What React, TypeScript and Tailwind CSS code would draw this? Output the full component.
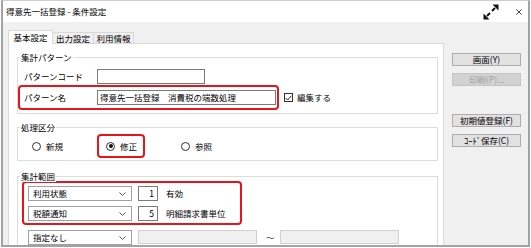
import React from 'react';

function GroupBox({ label, className, children }: { label: string; className?: string; children: React.ReactNode }) {
  return (
    <div className={`relative border border-[#dcdcdc] ${className ?? ''}`}>
      <span className="absolute left-[2px] top-[-6px] bg-white px-[1px] leading-[11px]">{label}</span>
      {children}
    </div>
  );
}

function Chevron() {
  return (
    <svg width="7" height="4" viewBox="0 0 7 4" className="shrink-0">
      <path d="M0.5 0.5 L3.5 3.5 L6.5 0.5" fill="none" stroke="#555" strokeWidth="1" />
    </svg>
  );
}

function Dropdown({ value }: { value: string }) {
  return (
    <div className="flex h-[15px] w-[104px] shrink-0 items-center justify-between border border-[#a0a0a0] bg-white pl-[4px] pr-[5px]">
      <span>{value}</span>
      <Chevron />
    </div>
  );
}

function NumBox({ value }: { value: string }) {
  return (
    <div className="flex h-[15px] w-[20px] shrink-0 items-center justify-end border border-[#7a7a7a] bg-white pr-[3px]">
      {value}
    </div>
  );
}

function Radio({ label, checked }: { label: string; checked?: boolean }) {
  return (
    <div className="flex items-center gap-[5px]">
      <span className="flex h-[9px] w-[9px] items-center justify-center rounded-full border border-[#333] bg-white">
        {checked && <span className="h-[4px] w-[4px] rounded-full bg-[#111]" />}
      </span>
      <span>{label}</span>
    </div>
  );
}

function SideButton({ label, disabled }: { label: string; disabled?: boolean }) {
  return (
    <div
      className={`flex h-[13px] w-[69px] items-center justify-center border ${
        disabled ? 'border-[#c4c4c4] bg-[#d2d2d2] text-[#a0a0a0]' : 'border-[#adadad] bg-[#e1e1e1] text-black'
      }`}
    >
      {label}
    </div>
  );
}

export default function App() {
  return (
    <div className="h-[248px] w-[531px] overflow-hidden bg-white font-['Noto_Sans_CJK_JP','Noto_Sans',sans-serif] text-[8.5px] leading-none text-black">
      <div className="ml-[1px] flex h-[247px] w-[529px] flex-col border-x-2 border-b-2 border-t border-[#a3a3a3] border-t-[#cfcfcf]">
        {/* title bar */}
        <div className="flex h-[21px] shrink-0 items-center bg-white pl-[3px] pr-[6px]">
          <span className="text-[8.5px]">得意先一括登録 - 条件設定</span>
          <div className="flex-1" />
          <svg width="16" height="16" viewBox="0 0 16 16" className="mt-[1px]">
            <path d="M15.5 0.5 L15.5 6.5 L9.5 0.5 Z" fill="#111" />
            <path d="M0.5 15.5 L0.5 9.5 L6.5 15.5 Z" fill="#111" />
            <path d="M12 4 L9 7" stroke="#111" strokeWidth="2" />
            <path d="M4 12 L7 9" stroke="#111" strokeWidth="2" />
          </svg>
          <svg width="6" height="6" viewBox="0 0 6 6" className="ml-[17px]">
            <path d="M0.3 0.3 L5.7 5.7 M5.7 0.3 L0.3 5.7" stroke="#333" strokeWidth="0.9" />
          </svg>
        </div>

        {/* body */}
        <div className="flex min-h-0 flex-1 bg-[#f0f0f0] pl-[5px] pt-[8px]">
          <div className="flex w-[436px] shrink-0 flex-col">
            <div className="flex h-[13px] items-end">
              <div className="relative z-10 -mb-[1px] flex h-[14px] w-[45px] items-center justify-center border border-b-0 border-[#d9d9d9] bg-white">
                基本設定
              </div>
              <div className="flex h-[11px] w-[41px] items-center justify-center border border-b-0 border-l-0 border-[#d9d9d9] bg-[#f0f0f0]">
                出力設定
              </div>
              <div className="flex h-[11px] w-[40px] items-center justify-center border border-b-0 border-l-0 border-[#d9d9d9] bg-[#f0f0f0]">
                利用情報
              </div>
            </div>

            <div className="min-h-0 flex-1 overflow-hidden border border-b-0 border-[#d9d9d9] bg-white pl-[8px] pr-[5px]">
              <GroupBox label="集計パターン" className="mt-[13px] pb-[3px] pt-[11px]">
                <div className="flex h-[15px] items-center pl-[6px]">
                  <span className="w-[73px] shrink-0">パターンコード</span>
                  <div className="h-[15px] w-[108px] border border-[#7a7a7a] bg-white" />
                </div>
                <div className="mt-[1px] flex items-center">
                  <div className="flex h-[25px] w-[261px] items-center rounded-[4px] border-2 border-[#e8141c] pl-[4px]">
                    <span className="w-[73px] shrink-0">パターン名</span>
                    <div className="flex h-[15px] w-[179px] items-center border border-[#7a7a7a] bg-white pl-[2px]">
                      得意先一括登録　消費税の端数処理
                    </div>
                  </div>
                  <div className="ml-[5px] flex items-center gap-[4px]">
                    <span className="flex h-[9px] w-[9px] items-center justify-center border border-[#333] bg-white">
                      <svg width="7" height="6" viewBox="0 0 7 6">
                        <path d="M0.6 3 L2.6 5 L6.4 0.8" fill="none" stroke="#222" strokeWidth="1" />
                      </svg>
                    </span>
                    <span>編集する</span>
                  </div>
                </div>
              </GroupBox>

              <GroupBox label="処理区分" className="mt-[13px] pb-[2px] pt-[6px]">
                <div className="flex h-[24px] items-center pl-[14px]">
                  <div className="w-[65px] shrink-0">
                    <Radio label="新規" />
                  </div>
                  <div className="flex h-[24px] w-[48px] shrink-0 items-center rounded-[4px] border-2 border-[#e8141c] pl-[7px]">
                    <Radio label="修正" checked />
                  </div>
                  <div className="ml-[36px]">
                    <Radio label="参照" />
                  </div>
                </div>
              </GroupBox>

              <GroupBox label="集計範囲" className="mt-[15px] h-[80px] pt-[4px]">
                <div className="ml-[4px] flex w-[220px] flex-col gap-[5px] rounded-[4px] border-2 border-[#e8141c] pb-[2px] pl-[4px] pt-[3px]">
                  <div className="flex items-center">
                    <Dropdown value="利用状態" />
                    <div className="ml-[6px]"><NumBox value="1" /></div>
                    <span className="ml-[8px]">有効</span>
                  </div>
                  <div className="flex items-center">
                    <Dropdown value="税額通知" />
                    <div className="ml-[6px]"><NumBox value="5" /></div>
                    <span className="ml-[8px]">明細請求書単位</span>
                  </div>
                </div>
                <div className="ml-[10px] mt-[5px] flex items-start">
                  <Dropdown value="指定なし" />
                  <div className="ml-[6px] h-[14px] w-[119px] border border-[#d0d0d0] bg-[#f0f0f0]" />
                  <span className="ml-[9px] mt-[3px] w-[14px] text-[#444]">～</span>
                  <div className="h-[14px] w-[119px] border border-[#d0d0d0] bg-[#f0f0f0]" />
                </div>
              </GroupBox>
            </div>
          </div>

          <div className="ml-[8px] flex flex-col pt-[23px]">
            <SideButton label="画面(Y)" />
            <div className="mt-[7px]"><SideButton label="印刷(P)..." disabled /></div>
            <div className="mt-[28px]"><SideButton label="初期値登録(F)" /></div>
            <div className="mt-[7px]"><SideButton label="ｺｰﾄﾞ保存(C)" /></div>
          </div>
        </div>
      </div>
    </div>
  );
}
